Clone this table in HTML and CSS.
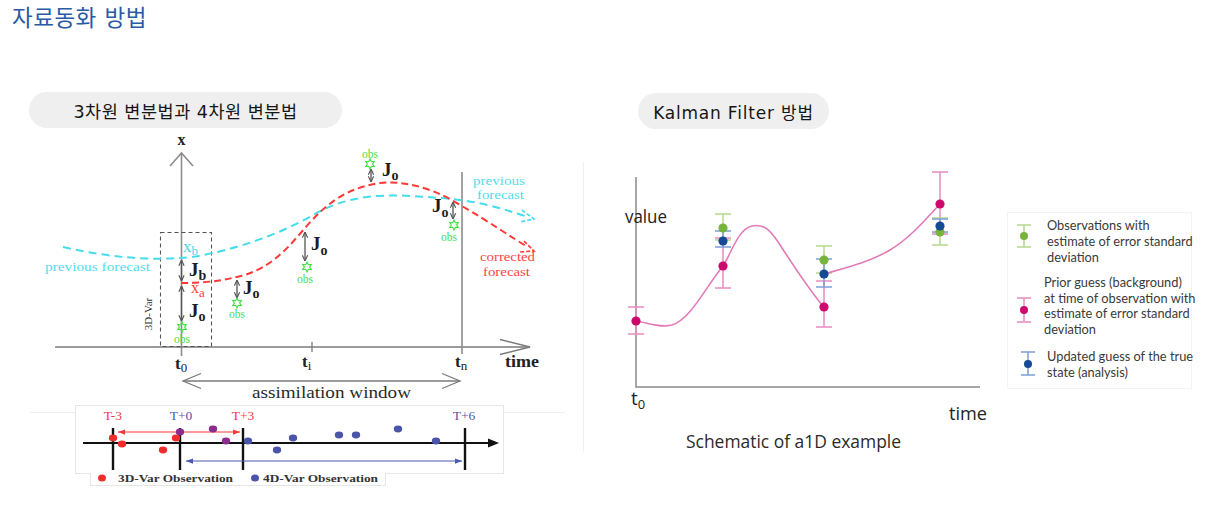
FILE: index.html
```html
<!DOCTYPE html>
<html lang="ko">
<head>
<meta charset="utf-8">
<title>자료동화 방법</title>
<link rel="stylesheet" href="styles.css">
</head>
<body>
<h1 class="page-title">자료동화 방법</h1>
<main class="panels">
  <section class="panel panel-var">
    <div class="pill pill-var">3차원 변분법과 4차원 변분법</div>
    <svg class="fig" viewBox="29 128 554 370" width="554" height="370">
      <defs>
        <marker id="m-grey" viewBox="0 0 8 8" refX="7.5" refY="4" markerWidth="7" markerHeight="7" markerUnits="userSpaceOnUse" orient="auto-start-reverse">
          <path d="M1,1 L7.5,4 L1,7" class="mk-grey"/>
        </marker>
        <marker id="m-red" viewBox="0 0 8 8" refX="8" refY="4" markerWidth="7" markerHeight="7" markerUnits="userSpaceOnUse" orient="auto-start-reverse">
          <path d="M0,1 L8,4 L0,7 Z" class="mk-red"/>
        </marker>
        <marker id="m-blue" viewBox="0 0 8 8" refX="8" refY="4" markerWidth="7" markerHeight="7" markerUnits="userSpaceOnUse" orient="auto-start-reverse">
          <path d="M0,1 L8,4 L0,7 Z" class="mk-blue"/>
        </marker>
        <polygon id="star" points="0,-5 1.3,-2.25 4.33,-2.5 2.6,0 4.33,2.5 1.3,2.25 0,5 -1.3,2.25 -4.33,2.5 -2.6,0 -4.33,-2.5 -1.3,-2.25"/>
      </defs>

      <!-- axes -->
      <line class="ax-v" x1="181.5" y1="153" x2="181.5" y2="356"/>
      <path class="ax-v" d="M170,166 L181.5,153 L193,166"/>
      <line class="ax-h" x1="55" y1="347" x2="530" y2="347"/>
      <path class="ax-h" d="M500,339.5 L530,347 L500,354.5"/>
      <line class="ax-v" x1="462" y1="172" x2="462" y2="354"/>
      <line class="ax-h" x1="312" y1="342" x2="312" y2="352"/>
      <text class="serif lbl-x" x="181.5" y="145">x</text>

      <!-- 3D-Var window -->
      <rect class="dash-box" x="160.5" y="232.5" width="51" height="114"/>
      <text class="serif lbl-3dvar" transform="translate(152,314) rotate(-90)">3D-Var</text>

      <!-- curves -->
      <path class="curve-cyan" d="M63,247 C110,258 150,260 181,258 S270,240 313,215 S400,195 440,198 S500,208 528,217"/>
      <path class="arrow-cyan" d="M522,210 L534,219 L520,222"/>
      <path class="curve-red" d="M181,283 C210,283 225,280 245,275 C275,265 290,245 305,228 C325,205 345,188 380,183 C410,180 440,192 460,205 C490,222 512,238 528,247"/>
      <path class="arrow-red" d="M524,241 L534,251 L520,252"/>

      <!-- labels on curves -->
      <text class="serif txt-cyan" x="45" y="271" textLength="105" lengthAdjust="spacingAndGlyphs">previous forecast</text>
      <text class="serif txt-cyan" x="473" y="185" textLength="52" lengthAdjust="spacingAndGlyphs">previous</text>
      <text class="serif txt-cyan" x="477" y="199" textLength="47" lengthAdjust="spacingAndGlyphs">forecast</text>
      <text class="serif txt-red" x="480" y="261" textLength="55" lengthAdjust="spacingAndGlyphs">corrected</text>
      <text class="serif txt-red" x="483" y="276" textLength="47" lengthAdjust="spacingAndGlyphs">forecast</text>
      <text class="serif txt-xb" x="183" y="252">x<tspan class="sub-sm" dy="3">b</tspan></text>
      <text class="serif txt-xa" x="191" y="293">x<tspan class="sub-sm" dy="4">a</tspan></text>

      <!-- cost arrows -->
      <line class="jarrow" x1="181.5" y1="260" x2="181.5" y2="281"/>
      <line class="jarrow" x1="181.5" y1="286" x2="181.5" y2="321"/>
      <line class="jarrow" x1="237" y1="280" x2="237" y2="298"/>
      <line class="jarrow" x1="305" y1="232" x2="305" y2="261"/>
      <line class="jarrow" x1="371" y1="169" x2="371" y2="182"/>
      <line class="jarrow" x1="453" y1="202" x2="453" y2="219"/>

      <text class="serif j-lbl" x="189" y="276">J<tspan class="j-sub" dy="4">b</tspan></text>
      <text class="serif j-lbl" x="189" y="317">J<tspan class="j-sub" dy="4">o</tspan></text>
      <text class="serif j-lbl" x="243" y="294">J<tspan class="j-sub" dy="4">o</tspan></text>
      <text class="serif j-lbl" x="311" y="250">J<tspan class="j-sub" dy="5">o</tspan></text>
      <text class="serif j-lbl" x="382" y="176">J<tspan class="j-sub" dy="4">o</tspan></text>
      <text class="serif j-lbl" x="432" y="212">J<tspan class="j-sub" dy="5">o</tspan></text>

      <!-- observations -->
      <use href="#star" class="star" transform="translate(182,327)"/>
      <use href="#star" class="star" transform="translate(237,303)"/>
      <use href="#star" class="star" transform="translate(307,267)"/>
      <use href="#star" class="star" transform="translate(370,164)"/>
      <use href="#star" class="star" transform="translate(454,225)"/>
      <text class="serif obs" x="182" y="343">obs</text>
      <text class="serif obs" x="237" y="318">obs</text>
      <text class="serif obs" x="305" y="283">obs</text>
      <text class="serif obs" x="370" y="158">obs</text>
      <text class="serif obs" x="449" y="241">obs</text>

      <!-- time labels -->
      <text class="serif t-lbl" x="175" y="369">t<tspan class="t-sub" dy="3">0</tspan></text>
      <text class="serif t-lbl" x="302" y="367">t<tspan class="t-sub" dy="3">i</tspan></text>
      <text class="serif t-lbl" x="455" y="367">t<tspan class="t-sub" dy="3">n</tspan></text>
      <text class="serif t-lbl" x="505" y="367" textLength="34" lengthAdjust="spacingAndGlyphs">time</text>

      <!-- assimilation window -->
      <line class="ax-h" x1="183" y1="381" x2="460" y2="381"/>
      <path class="ax-h" d="M201,373.5 L183,381 L201,388.5"/>
      <path class="ax-h" d="M442,373.5 L460,381 L442,388.5"/>
      <text class="serif assim" x="252" y="398" textLength="159" lengthAdjust="spacingAndGlyphs">assimilation window</text>

      <!-- lower figure: 3D-Var vs 4D-Var -->
      <line class="faint" x1="30" y1="412.5" x2="565" y2="412.5"/>
      <rect class="sub-frame" x="75.5" y="405.5" width="428" height="68"/>
      <rect class="sub-frame" x="90.5" y="473.5" width="295" height="12"/>
      <rect class="sub-fill" x="91" y="472" width="294" height="13"/>

      <text class="serif t-red" x="113" y="420">T-3</text>
      <text class="serif t-blue" x="181" y="420">T+0</text>
      <text class="serif t-red" x="243" y="420">T+3</text>
      <text class="serif t-blue" x="464" y="420">T+6</text>

      <line class="bk-axis" x1="83" y1="443" x2="491" y2="443"/>
      <polygon class="bk-fill" points="499,443 488,438.5 488,447.5"/>
      <line class="bk-tick" x1="113" y1="428" x2="113" y2="470"/>
      <line class="bk-tick" x1="180" y1="428" x2="180" y2="470"/>
      <line class="bk-tick" x1="243" y1="428" x2="243" y2="470"/>
      <line class="bk-tick" x1="465" y1="428" x2="465" y2="470"/>
      <line class="arr-red" x1="118" y1="432" x2="240" y2="432"/>
      <line class="arr-blue" x1="186" y1="461" x2="462" y2="461"/>

      <ellipse class="dot-red" cx="113" cy="438" rx="4.2" ry="3.4"/>
      <ellipse class="dot-red" cx="122" cy="444" rx="4.2" ry="3.4"/>
      <ellipse class="dot-red" cx="163" cy="450" rx="4.2" ry="3.4"/>
      <ellipse class="dot-red" cx="176" cy="438" rx="4.2" ry="3.4"/>
      <ellipse class="dot-purple" cx="180" cy="432" rx="4.2" ry="3.4"/>
      <ellipse class="dot-purple" cx="213" cy="429" rx="4.2" ry="3.4"/>
      <ellipse class="dot-purple" cx="226" cy="441" rx="4.2" ry="3.4"/>
      <ellipse class="dot-blue" cx="248" cy="441" rx="4.2" ry="3.4"/>
      <ellipse class="dot-blue" cx="277" cy="450" rx="4.2" ry="3.4"/>
      <ellipse class="dot-blue" cx="293" cy="438" rx="4.2" ry="3.4"/>
      <ellipse class="dot-blue" cx="339" cy="435" rx="4.2" ry="3.4"/>
      <ellipse class="dot-blue" cx="356" cy="435" rx="4.2" ry="3.4"/>
      <ellipse class="dot-blue" cx="398" cy="429" rx="4.2" ry="3.4"/>
      <ellipse class="dot-blue" cx="436" cy="441" rx="4.2" ry="3.4"/>

      <ellipse class="dot-red" cx="102" cy="478" rx="4" ry="3.5"/>
      <text class="serif sub-legend" x="118" y="482" textLength="115" lengthAdjust="spacingAndGlyphs">3D-Var Observation</text>
      <ellipse class="dot-blue" cx="255" cy="478" rx="4" ry="3.5"/>
      <text class="serif sub-legend" x="263" y="482" textLength="115" lengthAdjust="spacingAndGlyphs">4D-Var Observation</text>
    </svg>
  </section>

  <section class="panel panel-kf">
    <div class="pill pill-kf">Kalman Filter 방법</div>
    <div class="kf-figure">
      <svg class="fig" viewBox="583 129 424 331" width="424" height="331">
        <line class="kf-divider" x1="583.5" y1="162" x2="583.5" y2="452"/>
        <path class="kf-axis" d="M636,177 V387 H980"/>

        <!-- error bars -->
        <path class="bar-pink" d="M636,307 V334 M628,307 H644 M628,334 H644"/>

        <path class="bar-pink" d="M723,238 V288 M715,238 H731 M715,288 H731"/>
        <path class="bar-green" d="M723,214 V240 M715,214 H731 M715,240 H731"/>
        <path class="bar-blue" d="M723,231 V247 M715,231 H731 M715,247 H731"/>

        <path class="bar-pink" d="M824,281 V327 M816,281 H832 M816,327 H832"/>
        <path class="bar-green" d="M824,246 V273 M816,246 H832 M816,273 H832"/>
        <path class="bar-blue" d="M824,259 V287 M816,259 H832 M816,287 H832"/>

        <path class="bar-pink" d="M940,172 V234 M932,172 H948 M932,234 H948"/>
        <path class="bar-green" d="M940,218 V245 M932,218 H948 M932,245 H948"/>
        <path class="bar-blue" d="M940,219 V232 M932,219 H948 M932,232 H948"/>

        <!-- model trajectory -->
        <path class="kf-curve" d="M636,321 C648,323 660,328 672,325 C690,320 705,288 723,266 C731,254 738,229 752,226 C765,223 772,232 782,248 C795,268 810,290 822,305"/>
        <path class="kf-curve" d="M824,274 C845,268 870,262 890,250 C910,238 925,220 940,204"/>

        <!-- points -->
        <circle class="pt-pink" cx="636" cy="321" r="4.6"/>
        <circle class="pt-green" cx="723" cy="228" r="4.6"/>
        <circle class="pt-blue" cx="723" cy="241" r="4.6"/>
        <circle class="pt-pink" cx="723" cy="266" r="4.6"/>
        <circle class="pt-green" cx="824" cy="260" r="4.6"/>
        <circle class="pt-blue" cx="824" cy="274" r="4.6"/>
        <circle class="pt-pink" cx="824" cy="307" r="4.6"/>
        <circle class="pt-pink" cx="940" cy="204" r="4.6"/>
        <circle class="pt-green" cx="940" cy="232" r="4.6"/>
        <circle class="pt-blue" cx="940" cy="226" r="4.6"/>

        <text class="kf-label" x="625" y="223" textLength="42" lengthAdjust="spacingAndGlyphs">value</text>
        <text class="kf-label" x="631" y="405">t<tspan class="kf-sub" dy="4">0</tspan></text>
        <text class="kf-label" x="949" y="420" textLength="38" lengthAdjust="spacingAndGlyphs">time</text>
        <text class="kf-caption" x="686" y="448" textLength="215" lengthAdjust="spacingAndGlyphs">Schematic of a1D example</text>
      </svg>

      <ul class="legend">
        <li class="legend-item">
          <svg class="legend-icon legend-icon--up" viewBox="0 0 16 26" width="16" height="26"><path class="bar-green" d="M8,2 V24 M1,2 H15 M1,24 H15"/><circle class="pt-green" cx="8" cy="13" r="4"/></svg>
          <span class="legend-text">Observations with<br>estimate of error standard<br>deviation</span>
        </li>
        <li class="legend-item">
          <svg class="legend-icon legend-icon--down" viewBox="0 0 16 26" width="16" height="26"><path class="bar-pink" d="M8,1 V25 M1,1 H15 M1,25 H15"/><circle class="pt-pink" cx="8" cy="13" r="4"/></svg>
          <span class="legend-text legend-text--tight">Prior guess (background)<br>at time of observation with<br>estimate of error standard<br>deviation</span>
        </li>
        <li class="legend-item">
          <svg class="legend-icon legend-icon--blue" viewBox="0 0 16 26" width="16" height="26"><path class="bar-blue" d="M8,1 V24 M1,1 H15 M1,24 H15"/><circle class="pt-blue" cx="8" cy="13" r="4"/></svg>
          <span class="legend-text">Updated guess of the true<br>state (analysis)</span>
        </li>
      </ul>
    </div>
  </section>
</main>
</body>
</html>
```

FILE: styles.css
```css
html, body {
  margin: 0;
  padding: 0;
  background: #ffffff;
}

body {
  width: 1227px;
  height: 512px;
  overflow: hidden;
  font-family: "DejaVu Sans", "Noto Sans CJK KR", sans-serif;
  color: #1b1b1b;
}

.page-title {
  margin: 0;
  padding: 1px 12px 0;
  font-size: 22.5px;
  font-weight: 400;
  letter-spacing: 0.5px;
  line-height: 34px;
  color: #2a5aa6;
}

.panels {
  display: flex;
  align-items: flex-start;
  margin-top: 57px;
  padding-left: 29px;
}

.panel {
  display: flex;
  flex-direction: column;
  align-items: flex-start;
}

.panel-var {
  width: 554px;
  flex: none;
}

.pill {
  height: 36px;
  border-radius: 18px;
  background: #efefef;
  display: flex;
  align-items: center;
  justify-content: center;
  color: #161616;
  white-space: nowrap;
}

.pill-var {
  width: 313px;
  font-size: 17.5px;
  letter-spacing: 0.5px;
}

.pill-kf {
  width: 191px;
  margin-left: 55px;
  margin-top: 1px;
  font-size: 17px;
  letter-spacing: 0.8px;
}

.fig {
  display: block;
  flex: none;
}

.kf-figure {
  display: flex;
  align-items: flex-start;
}

/* ---------- left figure (SVG) ---------- */
.serif {
  font-family: "Liberation Serif", "Times New Roman", serif;
}

.mk-grey {
  fill: none;
  stroke: #555555;
  stroke-width: 1.3;
}

.mk-red {
  fill: #f23a3a;
}

.mk-blue {
  fill: #4a58b0;
}

.ax-v {
  fill: none;
  stroke: #8c8c8c;
  stroke-width: 1.6;
}

.ax-h {
  fill: none;
  stroke: #7a7a7a;
  stroke-width: 1.3;
}

.lbl-x {
  font-size: 16px;
  font-weight: 700;
  fill: #222222;
  text-anchor: middle;
}

.dash-box {
  fill: none;
  stroke: #555555;
  stroke-width: 1.1;
  stroke-dasharray: 4 3;
}

.lbl-3dvar {
  font-size: 11px;
  fill: #333333;
  text-anchor: middle;
}

.curve-cyan {
  fill: none;
  stroke: #45dcec;
  stroke-width: 2;
  stroke-dasharray: 8 5;
}

.arrow-cyan {
  fill: none;
  stroke: #45dcec;
  stroke-width: 1.6;
  stroke-dasharray: 4 2;
}

.curve-red {
  fill: none;
  stroke: #ff3838;
  stroke-width: 2;
  stroke-dasharray: 7 4;
}

.arrow-red {
  fill: none;
  stroke: #ff3838;
  stroke-width: 1.6;
  stroke-dasharray: 4 2;
}

.txt-cyan {
  font-size: 13px;
  fill: #52dded;
}

.txt-red {
  font-size: 13px;
  fill: #ff4545;
}

.txt-xb {
  font-size: 17px;
  fill: #45d6ea;
}

.txt-xa {
  font-size: 16px;
  fill: #ff4040;
}

.sub-sm {
  font-size: 13px;
}

.jarrow {
  stroke: #555555;
  stroke-width: 1.3;
  marker-start: url(#m-grey);
  marker-end: url(#m-grey);
}

.j-lbl {
  font-size: 19px;
  font-weight: 700;
  fill: #1c1c1c;
}

.j-sub {
  font-size: 14px;
}

.star {
  fill: none;
  stroke: #3ee03e;
  stroke-width: 1.1;
}

.obs {
  font-size: 11.5px;
  fill: #49dc49;
  text-anchor: middle;
}

.t-lbl {
  font-size: 17px;
  font-weight: 700;
  fill: #222222;
}

.t-sub {
  font-size: 13px;
  font-weight: 400;
}

.assim {
  font-size: 17px;
  fill: #2a2a2a;
}

.faint {
  stroke: #eeeeee;
  stroke-width: 1;
}

.sub-frame {
  fill: #ffffff;
  stroke: #e6e6e6;
  stroke-width: 1;
}

.sub-fill {
  fill: #ffffff;
}

.t-red {
  font-size: 13.5px;
  fill: #f23a3a;
  text-anchor: middle;
}

.t-blue {
  font-size: 13.5px;
  fill: #4a58b0;
  text-anchor: middle;
}

.bk-axis {
  stroke: #111111;
  stroke-width: 1.8;
}

.bk-fill {
  fill: #111111;
}

.bk-tick {
  stroke: #111111;
  stroke-width: 2.4;
}

.arr-red {
  stroke: #f23a3a;
  stroke-width: 1.2;
  marker-start: url(#m-red);
  marker-end: url(#m-red);
}

.arr-blue {
  stroke: #4a58b0;
  stroke-width: 1.2;
  marker-start: url(#m-blue);
  marker-end: url(#m-blue);
}

.dot-red {
  fill: #ef2d2d;
}

.dot-purple {
  fill: #8d2c8f;
}

.dot-blue {
  fill: #4a55aa;
}

.sub-legend {
  font-size: 11px;
  font-weight: 700;
  fill: #333333;
}

/* ---------- right figure ---------- */
.kf-divider {
  stroke: #f0f0f0;
  stroke-width: 1;
}

.kf-axis {
  fill: none;
  stroke: #8a8a8a;
  stroke-width: 1.5;
}

.kf-label {
  font-family: "Open Sans", "Liberation Sans", sans-serif;
  font-size: 19px;
  fill: #222222;
}

.kf-sub {
  font-size: 13px;
}

.kf-caption {
  font-family: "Open Sans", "Liberation Sans", sans-serif;
  font-size: 19px;
  fill: #2a2a2a;
}

.kf-curve {
  fill: none;
  stroke: #e27bb8;
  stroke-width: 1.6;
}

.bar-pink {
  fill: none;
  stroke: #e88cc2;
  stroke-width: 1.5;
}

.bar-green {
  fill: none;
  stroke: #b5d98c;
  stroke-width: 1.5;
}

.bar-blue {
  fill: none;
  stroke: #7d9ed6;
  stroke-width: 1.5;
}

.pt-pink {
  fill: #cc0a6e;
}

.pt-green {
  fill: #78b43c;
}

.pt-blue {
  fill: #174a94;
}

.legend {
  list-style: none;
  margin: 83px 0 0;
  padding: 4px 0 8px;
  width: 183px;
  border: 1px solid #f3f3f3;
  font-family: "Lato", "Liberation Sans", sans-serif;
  font-size: 12.8px;
  line-height: 16px;
  color: #3a3a3a;
}

.legend-item {
  display: flex;
  align-items: center;
}

.legend-item + .legend-item {
  margin-top: 10px;
}

.legend-icon {
  flex: none;
  display: block;
  margin-left: 8px;
}

.legend-icon--up {
  margin-top: -10px;
}

.legend-icon--down {
  margin-top: 8px;
}

.legend-icon--blue {
  margin-left: 12px;
}

.legend-text {
  margin-left: 15px;
  white-space: nowrap;
}

.legend-text--tight {
  margin-left: 12px;
  line-height: 15.7px;
}

.legend-icon--blue + .legend-text {
  margin-left: 11px;
}
```
